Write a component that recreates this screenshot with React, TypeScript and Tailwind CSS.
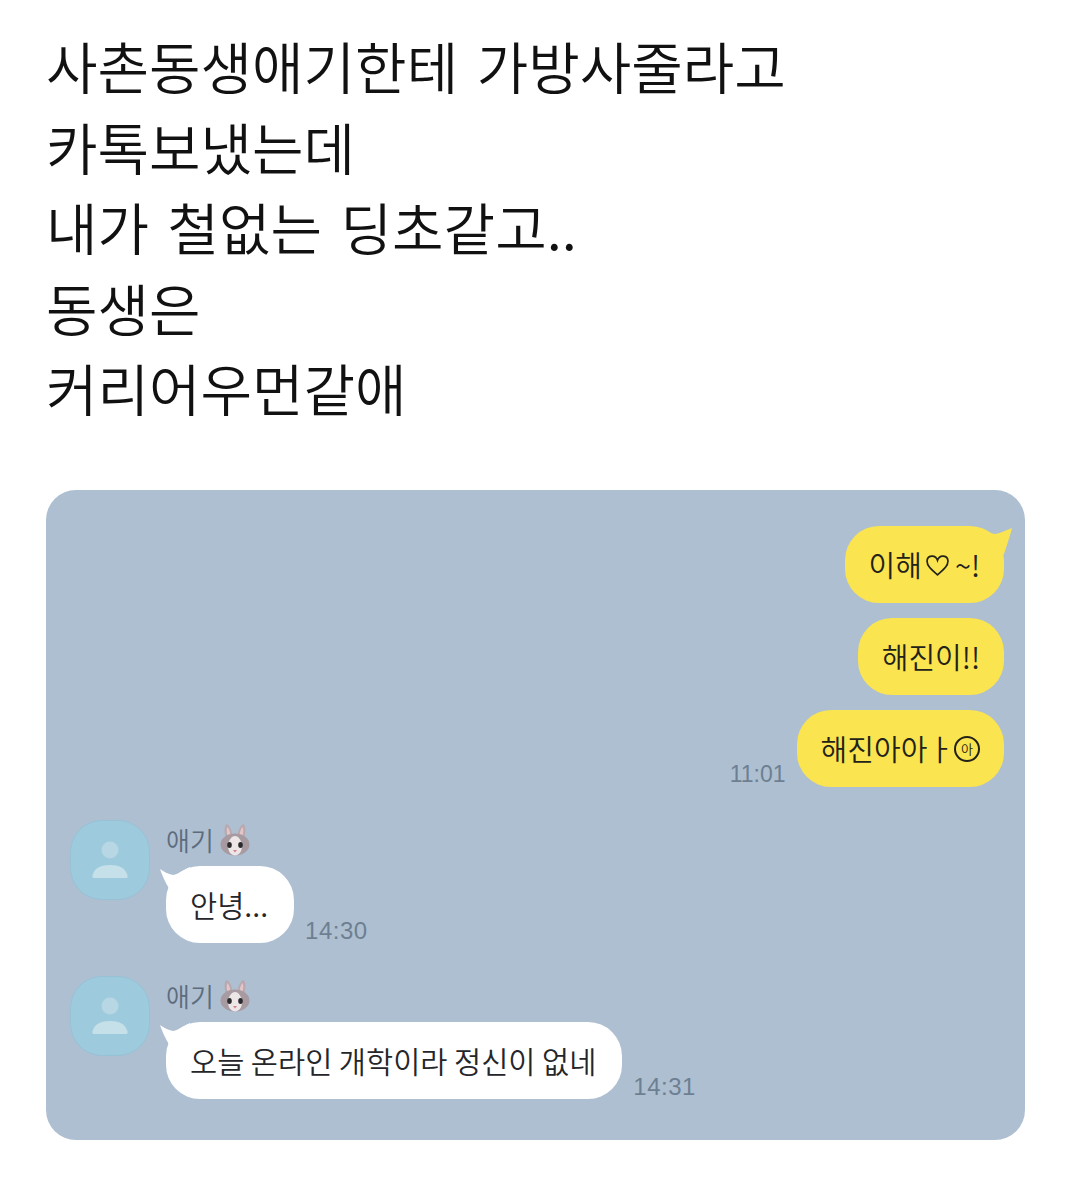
const KR = "font-['Noto_Sans_CJK_KR','Noto_Sans',sans-serif]";

const lines = ["사촌동생애기한테 가방사줄라고", "카톡보냈는데", "내가 철없는 딩초같고..", "동생은", "커리어우먼같애"];

const Rabbit = () => (
  <svg viewBox="0 0 30 33" className="w-[30px] h-[33px]">
    <path d="M6 15C4 9 4 3 6.500 1c3 1 5.500 6 6 12zM24 15c2-6 2-12-.5-14-3 1-5.500 6-6 12z" fill="#b9a9ae" />
    <path d="M7.500 13C6.500 9 6.500 6 7.500 4c1.500 1.500 2.800 5 3 9zM22.500 13c1-4 1-7 0-9-1.500 1.500-2.800 5-3 9z" fill="#e3c5ca" />
    <ellipse cx="15" cy="21.500" rx="14.500" ry="11" fill="#a79ba1" />
    <path d="M15 13c-3.500 0-7 5-7 10 0 6 3.500 9.500 7 9.500s7-3.500 7-9.500c0-5-3.500-10-7-10z" fill="#ece6e7" />
    <ellipse cx="9.500" cy="22" rx="2.300" ry="2.900" fill="#2d2a2e" />
    <ellipse cx="20.500" cy="22" rx="2.300" ry="2.900" fill="#2d2a2e" />
    <path d="M13 27h4l-2 2.500z" fill="#d77f8c" />
  </svg>
);

const Avatar = () => (
  <div className="w-[80px] h-[80px] rounded-[32px] bg-[#9dcadc] border border-[#97c2d6] flex items-center justify-center shrink-0">
    <svg viewBox="0 0 36 38" className="w-[36px] h-[38px]">
      <circle cx="18" cy="9" r="8.500" fill="#b7d7e5" />
      <path d="M2 37c-2 0-2-2-1-4 2-6 8-9 17-9s15 3 17 9c1 2 1 4-1 4z" fill="#c6e0ea" />
    </svg>
  </div>
);

const Mine = ({ text, time }: { text: React.ReactNode; time?: string }) => (
  <div className="flex items-end justify-end gap-[11px]">
    {time && <span className="text-[23px] leading-[26px] text-[#6d7f91] font-['Liberation_Sans',sans-serif]">{time}</span>}
    <div className="h-[77px] rounded-[34px] bg-[#fae44f] flex items-center pl-[24px] pr-[24px] pt-[2px] text-[29px] font-[350] text-[#23221a]">{text}</div>
  </div>
);

const Theirs = ({ text, time }: { text: string; time: string }) => (
  <div className="flex gap-[16px]">
    <Avatar />
    <div className="flex flex-col">
      <div className="flex items-center gap-[6px] h-[36px] mt-[2px] text-[26px] font-[350] text-[#5c6c7d]">
        애기
        <Rabbit />
      </div>
      <div className="flex items-end gap-[11px] mt-[8px]">
        <div className="relative h-[77px] rounded-[34px] bg-white flex items-center pl-[24px] pr-[26px] text-[29.500px] font-[350] text-[#25262a]">
          <svg viewBox="0 0 30 24" className="absolute left-[-6px] top-0 w-[30px] h-[24px]">
            <path d="M0 3c4 3 8 5 13 6 6-1 10-5 17-8v23H10C5 16 2 9 0 3z" fill="#fff" />
          </svg>
          <span className="relative">{text}</span>
        </div>
        <span className="text-[24px] leading-[26px] -mb-[1px] tracking-[0.5px] text-[#6d7f91] font-['Liberation_Sans',sans-serif]">{time}</span>
      </div>
    </div>
  </div>
);

export default function App() {
  return (
    <div className={`w-[1071px] h-[1200px] bg-white ${KR} px-[46px] pt-[27px]`}>
      <div className="text-[56px] leading-[80.500px] text-[#111] whitespace-nowrap font-[350] [word-spacing:6px] -mt-[2px]">
        {lines.map((l) => (
          <div key={l}>{l}</div>
        ))}
      </div>

      <div className="mt-[62px] w-[979px] h-[650px] rounded-[30px] bg-[#aebfd2] pt-[36px] pl-[24px] pr-[21px]">
        <div className="flex flex-col gap-[15px]">
          <div className="relative flex justify-end">
            <Mine
              text={
                <span className="flex items-center">
                  이해
                  <svg viewBox="0 0 24 22" className="w-[27px] h-[23px] ml-[2px] mr-[4px]">
                    <path d="M12 20C5 14 2 11 2 7c0-6 8-7 10-1 2-6 10-5 10 1 0 4-3 7-10 13z" fill="none" stroke="#23221a" strokeWidth="1.600" />
                  </svg>
                  ~!
                </span>
              }
            />
            <svg viewBox="0 0 30 30" className="absolute right-[-8px] top-0 w-[30px] h-[30px]">
              <path d="M0 3c5 1 9 5 13 5 6-1 11-4 17-6-2 8-4 14-8 26H0z" fill="#fae44f" />
            </svg>
          </div>
          <Mine text="해진이!!" />
          <Mine
            time="11:01"
            text={
              <span className="flex items-center">
                해진아아ㅏ
                <span className="w-[26px] h-[26px] rounded-full border-2 border-[#23221a] text-[13px] flex items-center justify-center">아</span>
              </span>
            }
          />
        </div>
        <div className="mt-[33px] flex flex-col gap-[33px]">
          <Theirs text="안녕..." time="14:30" />
          <Theirs text="오늘 온라인 개학이라 정신이 없네" time="14:31" />
        </div>
      </div>
    </div>
  );
}
